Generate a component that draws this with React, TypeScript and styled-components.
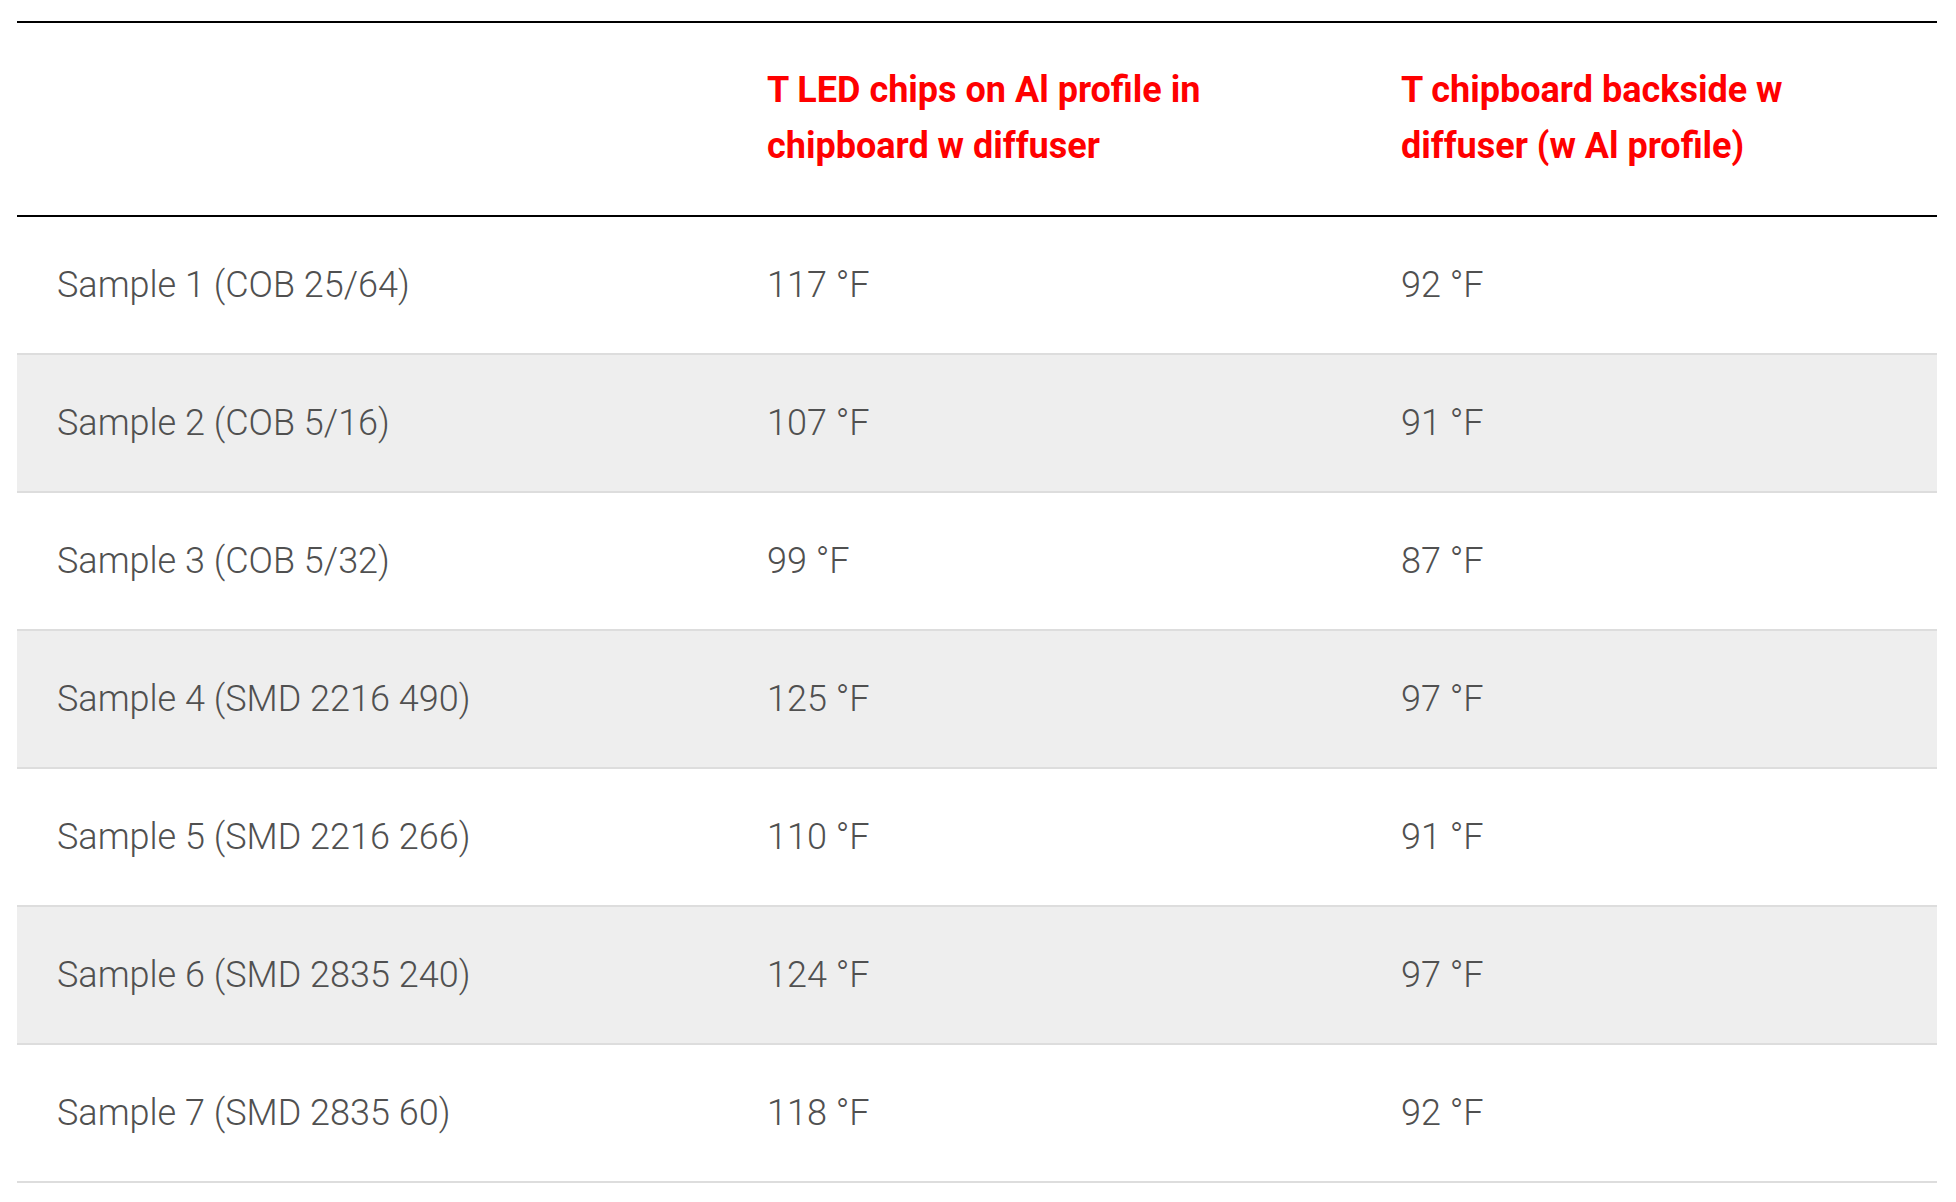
import styled, { createGlobalStyle } from 'styled-components';

const GlobalStyle = createGlobalStyle`
  html, body {
    margin: 0;
    padding: 0;
    background: #ffffff;
  }
  body {
    font-family: Roboto, 'Liberation Sans', sans-serif;
  }
`;

const Page = styled.div`
  padding: 21px 19px 0 17px;
`;

const Table = styled.div`
  display: grid;
  grid-template-columns: 710px 634px 1fr;
  border-top: 2px solid #000;
`;

const Row = styled.div<{ striped?: boolean; isHead?: boolean }>`
  display: contents;
  & > div {
    background-color: ${(props) => (props.striped ? '#eeeeee' : 'transparent')};
    border-bottom: 2px solid ${(props) => (props.isHead ? '#000' : '#dddddd')};
  }
`;

const HeadCell = styled.div`
  padding: 39px 40px 41px;
  color: #ff0000;
  font-weight: 700;
  font-size: 36px;
  line-height: 56px;
`;

const Cell = styled.div`
  display: flex;
  align-items: center;
  height: 138px;
  box-sizing: border-box;
  padding: 0 40px;
  color: #505050;
  font-weight: 300;
  font-size: 36px;
`;

const samples = [
  { name: 'Sample 1 (COB 25/64)', chips: '117 °F', back: '92 °F' },
  { name: 'Sample 2 (COB 5/16)', chips: '107 °F', back: '91 °F' },
  { name: 'Sample 3 (COB 5/32)', chips: '99 °F', back: '87 °F' },
  { name: 'Sample 4 (SMD 2216 490)', chips: '125 °F', back: '97 °F' },
  { name: 'Sample 5 (SMD 2216 266)', chips: '110 °F', back: '91 °F' },
  { name: 'Sample 6 (SMD 2835 240)', chips: '124 °F', back: '97 °F' },
  { name: 'Sample 7 (SMD 2835 60)', chips: '118 °F', back: '92 °F' },
];

const App = () => {
  return (
    <>
      <GlobalStyle />
      <Page>
        <Table>
          <Row isHead>
            <HeadCell />
            <HeadCell>
              T LED chips on Al profile in
              <br />
              chipboard w diffuser
            </HeadCell>
            <HeadCell>
              T chipboard backside w
              <br />
              diffuser (w Al profile)
            </HeadCell>
          </Row>
          {samples.map((s, i) => (
            <Row key={s.name} striped={i % 2 === 1}>
              <Cell>{s.name}</Cell>
              <Cell>{s.chips}</Cell>
              <Cell>{s.back}</Cell>
            </Row>
          ))}
        </Table>
      </Page>
    </>
  );
};

export default App;
